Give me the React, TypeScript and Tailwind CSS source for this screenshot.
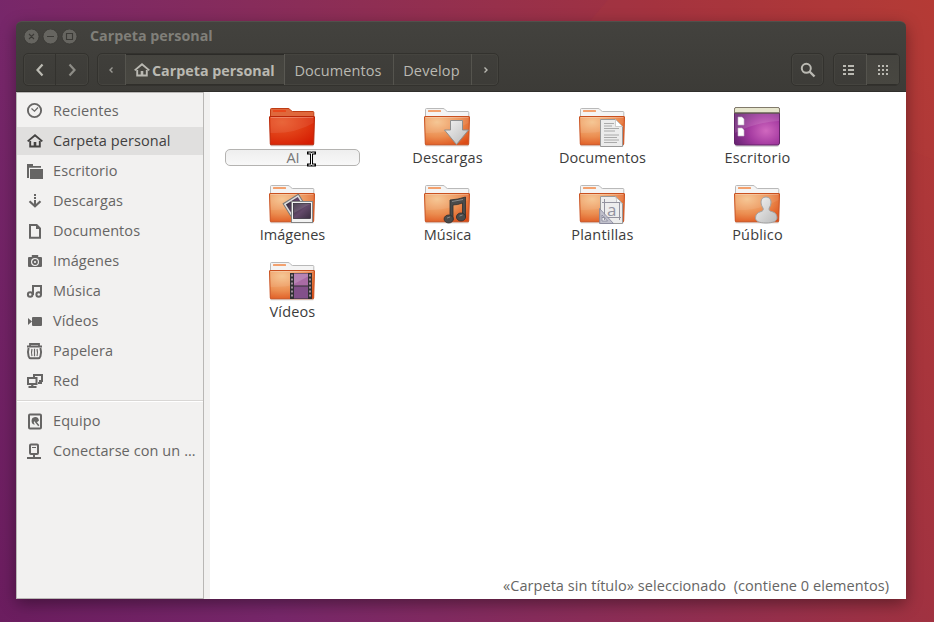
import React from 'react';

const G = '#666564';

type Name = 'clock' | 'home' | 'folder' | 'download' | 'doc' | 'camera' | 'music' | 'video' | 'trash' | 'network' | 'disk' | 'server';

function SideIcon({ name, color = G }: { name: Name; color?: string }) {
  const shapes: Record<Name, React.ReactNode> = {
    clock: (
      <g fill="none" stroke={color}>
        <circle cx="7.500" cy="7.500" r="6.600" strokeWidth="1.900" />
        <path d="M4.500 5.500l3 2.600L11 4.500" strokeWidth="1.200" />
      </g>
    ),
    home: (
      <g fill="none" stroke={color} strokeWidth="1.900">
        <path d="M.7 8.400L8 2.200l7.300 6.200" />
        <path d="M3.200 8v5.500h9.600V8" />
        <path d="M8 9V13.500" strokeWidth="2.600" />
      </g>
    ),
    folder: (
      <g fill={color}>
        <path d="M0 1h6v2h8v1.800H2V15H0z" />
        <path d="M3 6h13v10H3z" />
      </g>
    ),
    download: (
      <g fill="none" stroke={color}>
        <path d="M8 1v8" strokeWidth="2" strokeDasharray="2 1" />
        <path d="M2.500 8.200L8 13.200l5.500-5" strokeWidth="2.200" />
        <path d="M8 9v4" strokeWidth="2" />
      </g>
    ),
    doc: (
      <g>
        <path d="M3 2h6.600L13 5.500V14.800H3z" fill="none" stroke={color} strokeWidth="2" />
        <path d="M9 1l5 5H9z" fill={color} />
      </g>
    ),
    camera: (
      <g>
        <path fillRule="evenodd" d="M4.800 2h6.400v2H14q1 0 1 1v8q0 1-1 1H2q-1 0-1-1V5q0-1 1-1h2.800zM8 5a4 4 0 100 8 4 4 0 000-8" fill={color} />
        <circle cx="8" cy="9" r="2" fill="none" stroke={color} strokeWidth="1.800" />
      </g>
    ),
    music: (
      <g fill="none" stroke={color} strokeWidth="2">
        <circle cx="3.200" cy="11.500" r="2.300" />
        <circle cx="11.700" cy="11.500" r="2.300" />
        <path d="M6 12V3h8v9" />
      </g>
    ),
    video: (
      <g fill={color}>
        <rect x="5" y="4" width="10" height="9" rx="1" />
        <path d="M1 5l4 3.500L1 12z" />
      </g>
    ),
    trash: (
      <g fill="none" stroke={color}>
        <path d="M0 3.500h15M3 3V1h9v2" strokeWidth="1.800" />
        <path d="M1.600 5q-1.300 4.500 0 8.300 .6 2 2 2h7.800q1.400 0 2-2 1.500-3.800 0-8.300" strokeWidth="2" />
        <path d="M5 6q-1 3.500 0 7M7.500 5.800v7.400M10 6q1 3.500 0 7" strokeWidth="1.200" />
      </g>
    ),
    network: (
      <g fill="none" stroke={color} strokeWidth="2">
        <path d="M7 4V2h8v6h-3" />
        <rect x="1" y="5" width="8.500" height="6" />
        <path d="M1.500 14h8M5.300 11v3" strokeWidth="2.200" />
        <path d="M11 10h4" />
      </g>
    ),
    disk: (
      <g>
        <rect x="2" y="1.500" width="12" height="14" rx="1" fill="none" stroke={color} strokeWidth="2" />
        <path d="M8 4a3.800 3.800 0 013.900 3.800L9.500 9.500 8.300 7.700 6.700 9l1 2.700A3.900 3.900 0 018 4z" fill={color} />
        <path d="M8 8l3.800 4.700" stroke={color} strokeWidth="1.500" />
      </g>
    ),
    server: (
      <g fill="none" stroke={color} strokeWidth="2">
        <rect x="3" y="1.500" width="8" height="9.500" rx="1" />
        <path d="M0 15h14M7 11v4" />
        <path d="M5 4.500h4" strokeWidth="1" />
      </g>
    ),
  };
  return (
    <svg width="16" height="16" viewBox="0 0 16 16" className="shrink-0 overflow-visible">
      {shapes[name]}
    </svg>
  );
}

function SideItem({ name, label, active }: { name: Name; label: string; active?: boolean }) {
  return (
    <div className={`flex h-7 shrink-0 items-center gap-[10px] pl-[10px] ${active ? 'bg-[#e0dfde] text-[#41403f]' : 'text-[#666564]'}`}>
      <SideIcon name={name} color={active ? '#434241' : G} />
      <span className="tracking-[0.08px] whitespace-nowrap">{label}</span>
    </div>
  );
}

type Emblem = 'down' | 'doc' | 'photos' | 'note' | 'template' | 'person' | 'film';

function Folder({ red, emblem }: { red?: boolean; emblem?: Emblem }) {
  const id = red ? 'red' : 'orange';
  return (
    <svg width="48" height="42" viewBox="0 0 48 42" className="block">
      <defs>
        <radialGradient id={`f-${id}`} cx="0.28" cy="0.2" r="0.95">
          <stop offset="0" stopColor={red ? '#e8592a' : '#f5c28c'} />
          <stop offset="0.55" stopColor={red ? '#df3a13' : '#eb8d50'} />
          <stop offset="1" stopColor={red ? '#d51c02' : '#dc4c16'} />
        </radialGradient>
        <linearGradient id="metal" x1="0" y1="0" x2="1" y2="1">
          <stop offset="0" stopColor="#f4f4f4" />
          <stop offset="1" stopColor="#b9b9b9" />
        </linearGradient>
        <linearGradient id="violet" x1="0" y1="0" x2="1" y2="1">
          <stop offset="0" stopColor="#342a3a" />
          <stop offset="0.5" stopColor="#63496a" />
          <stop offset="1" stopColor="#3b2e42" />
        </linearGradient>
      </defs>
      <rect x="2" y="37" width="44" height="3.500" rx="1.500" fill="#000" opacity=".12" />
      <path d="M2.500 12V3.500q0-1 1-1H20q1.500 0 2.200 1.200t2.300 1.800H45q.8 0 .8 1V12z" fill={red ? '#df683c' : '#f4f4f4'} stroke={red ? '#bf3c13' : '#b9b9b9'} />
      <rect x="5" y="4" width="13" height="2" rx=".5" fill={red ? '#e8481c' : '#f3a16e'} />
      <path d="M1.500 11q0-.5.500-.5h44q.5 0 .5.500l-.8 27q0 .8-.8.800H3.100q-.8 0-.8-.800z" fill={`url(#f-${id})`} stroke={red ? '#b92506' : '#c9501f'} />
      <path d="M2.600 11.500h42.800" stroke="#fff" opacity=".3" />
      <path d="M2.500 27q24 1 43-10v-5h-43z" fill="#fff" opacity=".08" />
      {emblem === 'down' && <path d="M27.500 14.500h12V24h6L33.500 38.500 21.500 24h6z" fill="url(#metal)" stroke="#8f8f8f" />}
      {emblem === 'doc' && (
        <g>
          <path d="M22.500 13.500h15l7 7v20h-22z" fill="#ececec" stroke="#999" />
          <path d="M37.500 13.500v7h7z" fill="#fff" stroke="#bbb" strokeWidth=".7" />
          <path d="M26 17.500h10M26 20h8M26 22.500h15M26 25h11M26 29h15M26 31.500h13M26 34h15M26 36.500h13" stroke="#999" strokeWidth=".8" />
        </g>
      )}
      {emblem === 'photos' && (
        <g>
          <g transform="rotate(-32 26 24)">
            <rect x="18.500" y="15.500" width="18" height="18" fill="#ddd" stroke="#777" />
            <rect x="20.500" y="17.500" width="14" height="12" fill="url(#violet)" />
          </g>
          <rect x="23.500" y="18.500" width="21" height="21" fill="#f2f2f2" stroke="#858585" />
          <rect x="25.500" y="20.500" width="17" height="15" fill="url(#violet)" stroke="#282330" strokeWidth=".7" />
          <path d="M26 21h16L26 30z" fill="#fff" opacity=".13" />
        </g>
      )}
      {emblem === 'note' && (
        <g fill="#4b4b4b" stroke="#2f2f2f" strokeWidth=".8">
          <path d="M27 17q8-.5 15.500-3v20h-3V20q-5 2-9.500 2v15h-3z" />
          <ellipse cx="25.700" cy="36" rx="4.600" ry="4" />
          <ellipse cx="38" cy="34" rx="4.600" ry="4" />
          <path d="M29 18.500l11-2M24 35l3-1M36.500 33l3-1" stroke="#999" />
        </g>
      )}
      {emblem === 'template' && (
        <g>
          <path d="M22.500 13.500h15l7 7v20h-22z" fill="#ededed" stroke="#999" />
          <path d="M37.500 13.500q2 3 1 6 3-1 6 1z" fill="#fff" stroke="#aaa" strokeWidth=".7" />
          <path d="M26.500 16v21M41.500 19v18M24 19.500h17M24 34.500h19" stroke="#93939f" />
          <text x="29" y="32.500" fontFamily="Open Sans, sans-serif" fontSize="17" fill="#9292a0">a</text>
          <path fillRule="evenodd" d="M21.500 25.500v15h14zM24 32v6h5.500z" fill="#b8b8c5" fillOpacity=".85" stroke="#85859a" strokeWidth=".8" />
        </g>
      )}
      {emblem === 'person' && (
        <path d="M33 14c3 0 5 2 5 5s-1 4.500-1.800 6c-.5 2 .3 3 2.300 3.500 4 1 5.500 3 5.500 6.500 0 3-4 5-11 5s-10.500-2-10.500-5c0-3.500 2-5.500 5.500-6.500 2-.5 2.700-1.500 2-3.500-.8-1.500-2-3-2-6 0-3 2-5 5-5z" fill="url(#metal)" stroke="#a2a2a2" />
      )}
      {emblem === 'film' && (
        <g>
          <rect x="22" y="13" width="22" height="26" fill="#303033" />
          <rect x="26" y="13.500" width="14" height="12" fill="#a96ba5" />
          <rect x="26" y="26.500" width="14" height="12" fill="#83508a" />
          <path d="M26 13.500h14v3L26 24z" fill="#fff" opacity=".17" />
          <path d="M24 14.500v24M42 14.500v24" stroke="#a08f9c" strokeWidth="2" strokeDasharray="2 2" />
        </g>
      )}
    </svg>
  );
}

function DesktopIcon() {
  return (
    <svg width="48" height="42" viewBox="0 0 48 42" className="block">
      <defs>
        <radialGradient id="desk" cx="0.7" cy="0.62" r="0.75">
          <stop offset="0" stopColor="#d068bf" />
          <stop offset="0.5" stopColor="#a53ba1" />
          <stop offset="1" stopColor="#692474" />
        </radialGradient>
      </defs>
      <rect x="2" y="37" width="44" height="4" rx="2" fill="#000" opacity=".15" />
      <rect x="1.500" y="1.500" width="45" height="37.500" rx="2" fill="url(#desk)" stroke="#642369" />
      <path d="M2 7h44v8q-22 1-44 12z" fill="#fff" opacity=".12" />
      <path d="M1.500 7V3q0-1.500 1.500-1.500h42q1.500 0 1.500 1.500v4z" fill="#e6e5cc" stroke="#77775e" strokeWidth=".8" />
      <path d="M2 7h44" stroke="#4e4640" />
      <path d="M5 11h4l2 2v6H5zM5 22h4l2 2v6H5z" fill="#fff" stroke="#c7b5cb" strokeWidth=".6" />
    </svg>
  );
}

const grid: { label: string; emblem?: Emblem; tracking?: string }[] = [
  { label: 'AI' },
  { label: 'Descargas', emblem: 'down', tracking: 'tracking-[0.12px]' },
  { label: 'Documentos', emblem: 'doc', tracking: 'tracking-[0.08px]' },
  { label: 'Escritorio', tracking: 'tracking-[0.25px]' },
  { label: 'Imágenes', emblem: 'photos' },
  { label: 'Música', emblem: 'note' },
  { label: 'Plantillas', emblem: 'template', tracking: 'tracking-[0.2px]' },
  { label: 'Público', emblem: 'person', tracking: 'tracking-[0.15px]' },
  { label: 'Vídeos', emblem: 'film', tracking: 'tracking-[0.15px]' },
];

function TextCursor() {
  return (
    <svg width="9" height="16" viewBox="0 0 9 16" className="absolute top-px left-[81px]">
      <path d="M1.500 2h2q1 0 1 1 0-1 1-1h2M4.500 2.500v11M1.500 14h2q1 0 1-1 0 1 1 1h2" fill="none" stroke="#000" strokeWidth="3" strokeLinecap="square" />
      <path d="M1.500 2h2q1 0 1 1 0-1 1-1h2M4.500 2.500v11M1.500 14h2q1 0 1-1 0 1 1 1h2" fill="none" stroke="#fff" strokeWidth="1" />
    </svg>
  );
}

const group = 'flex h-[33px] overflow-hidden rounded-[5px] border border-[#33322e] shadow-[inset_0_0_0_1px_#45443f]';
const pressed = 'bg-linear-to-b from-[#45443f] to-[#484741] shadow-[inset_0_1px_0_#2c2b28,inset_0_-1px_0_#302f2b]';

export default function App() {
  return (
    <div className="relative h-[622px] w-[934px] overflow-hidden bg-[linear-gradient(65deg,#6b1d5f_0%,#77276a_23%,#8a2d58_48%,#97304b_64%,#a13240_77%,#b43a35_100%)] pt-[21px] pl-4 font-['Open_Sans',sans-serif] text-[14.5px] leading-5">
      <svg className="absolute top-0 left-0" width="934" height="622">
        <path d="M608 0H934V160L590 21z" fill="#c04338" opacity=".12" />
      </svg>
      <div className="relative flex h-[578px] w-[890px] flex-col rounded-t-[6px] shadow-[0_5px_16px_rgba(0,0,0,0.38)]">
        <header className="flex h-[71px] shrink-0 flex-col rounded-t-[6px] border-t border-[#51504b] bg-linear-to-b from-[#43423e] to-[#3c3b37] shadow-[inset_0_-1px_0_#302f2c]">
          <div className="flex h-[29px] items-center pl-[8px]">
            <svg width="54" height="16" viewBox="0 0 54 16">
              <g fill="#666560" stroke="#383733" strokeWidth=".8">
                <circle cx="7.500" cy="7.500" r="7.500" />
                <circle cx="26.500" cy="7.500" r="7.500" />
                <circle cx="45.500" cy="7.500" r="7.500" />
              </g>
              <path d="M5 5l5 5m0-5l-5 5M23 7.500h7M42.500 4.500h6v6h-6z" fill="none" stroke="#3b3a36" strokeWidth="1.100" />
            </svg>
            <span className="ml-[12px] pb-[2px] text-[14.3px] font-bold text-[#807f79]">Carpeta personal</span>
          </div>
          <div className="flex items-start pt-[2px] pr-[6px] pl-[7px] text-[#bab9b2]">
            <div className={group + ' w-[66px]'}>
              <div className="flex w-8 items-center justify-center border-r border-[#33322e]">
                <svg width="12" height="14" viewBox="0 0 12 14"><path d="M8.500 1.500L3.500 7l5 5.500" fill="none" stroke="#bbbab2" strokeWidth="2.200" /></svg>
              </div>
              <div className="flex flex-1 items-center justify-center">
                <svg width="12" height="14" viewBox="0 0 12 14"><path d="M3.500 1.500l5 5.500-5 5.500" fill="none" stroke="#8d8c86" strokeWidth="2.200" /></svg>
              </div>
            </div>
            <div className={group + ' ml-[8px] w-[402px]'}>
              <div className="flex w-[28px] items-center justify-center border-r border-[#55544e] pr-px">
                <svg width="6" height="8" viewBox="0 0 6 8"><path d="M4.500 1.500L2 4l2.500 2.500" fill="none" stroke="#9c9b95" strokeWidth="1.400" /></svg>
              </div>
              <div className={pressed + ' flex w-[159px] items-center border-r border-[#595852] pl-[8px]'}>
                <SideIcon name="home" color="#bab9b2" />
                <span className="ml-[2px] pt-[2px] text-[14.3px] font-bold whitespace-nowrap">Carpeta personal</span>
              </div>
              <div className="flex w-[109px] items-center justify-center border-r border-[#55544e] pt-[2px] pr-[2px] tracking-[0.08px]">Documentos</div>
              <div className="flex w-[78px] items-center justify-center border-r border-[#55544e] pt-[2px] pr-[2px] tracking-[0.2px]">Develop</div>
              <div className="flex flex-1 items-center justify-center pl-px">
                <svg width="6" height="8" viewBox="0 0 6 8"><path d="M1.500 1.500L4 4 1.500 6.500" fill="none" stroke="#bab9b2" strokeWidth="1.400" /></svg>
              </div>
            </div>
            <div className={group + ' ml-auto w-[33px] items-center justify-center'}>
              <svg width="16" height="16" viewBox="0 0 16 16"><circle cx="6.300" cy="6.300" r="4.500" fill="none" stroke="#bab9b2" strokeWidth="2" /><path d="M9.500 9.500l5 5" stroke="#bab9b2" strokeWidth="2.400" /></svg>
            </div>
            <div className={group + ' ml-[9px] w-[67px]'}>
              <div className="flex w-[33px] items-center justify-center border-r border-[#55544e] pr-[2px]">
                <svg width="12" height="10" viewBox="0 0 12 10" fill="#bab9b2"><path d="M0 0h3v2H0zM5 0h6v2H5zM0 4h3v2H0zM5 4h6v2H5zM0 8h3v2H0zM5 8h6v2H5z" /></svg>
              </div>
              <div className={pressed + ' flex flex-1 items-center justify-center'}>
                <svg width="10" height="10" viewBox="0 0 10 10" fill="#bab9b2"><path d="M0 0h2v2H0zM4 0h2v2H4zM8 0h2v2H8zM0 4h2v2H0zM4 4h2v2H4zM8 4h2v2H8zM0 8h2v2H0zM4 8h2v2H4zM8 8h2v2H8z" /></svg>
              </div>
            </div>
          </div>
        </header>
        <div className="flex min-h-0 flex-1">
          <aside className="w-[188px] shrink-0 border border-[#b9b7b5] bg-[#f2f1f0] pt-1">
            <nav className="flex flex-col gap-[2px]">
              <SideItem name="clock" label="Recientes" />
              <SideItem name="home" label="Carpeta personal" active />
              <SideItem name="folder" label="Escritorio" />
              <SideItem name="download" label="Descargas" />
              <SideItem name="doc" label="Documentos" />
              <SideItem name="camera" label="Imágenes" />
              <SideItem name="music" label="Música" />
              <SideItem name="video" label="Vídeos" />
              <SideItem name="trash" label="Papelera" />
              <SideItem name="network" label="Red" />
            </nav>
            <div className="mt-[5px] mb-[5px] h-[2px] border-t border-[#d9d7d5] bg-white" />
            <nav className="flex flex-col gap-[2px]">
              <SideItem name="disk" label="Equipo" />
              <SideItem name="server" label="Conectarse con un …" />
            </nav>
          </aside>
          <div className="w-[6px] shrink-0 bg-[#f2f1f0]" />
          <main className="flex flex-1 flex-col bg-white">
            <div className="grid auto-rows-[77px] grid-cols-[repeat(4,155px)] pt-[14px] pl-[5px]">
              {grid.map((item, i) => (
                <div key={item.label} className="flex flex-col items-center text-[#3c3c3c]">
                  <div className="h-[42px] pr-[2px]">
                    {item.label === 'Escritorio' ? <DesktopIcon /> : <Folder red={i === 0} emblem={item.emblem} />}
                  </div>
                  {i === 0 ? (
                    <div className="relative mt-px flex h-[17px] w-[135px] items-center justify-center rounded-[5px] border border-[#b4b3b1] bg-linear-to-b from-[#eeeeee] to-[#f8f8f8] text-[#777]">
                      <span className="pl-px leading-[15px]">AI</span>
                      <TextCursor />
                    </div>
                  ) : (
                    <span className={`whitespace-nowrap ${item.tracking ?? ''}`}>{item.label}</span>
                  )}
                </div>
              ))}
            </div>
            <div className="mt-auto pr-[17px] pb-[3px] text-right tracking-[0.05px] whitespace-pre text-[#666564]">«Carpeta sin título» seleccionado  (contiene 0 elementos)</div>
          </main>
        </div>
      </div>
    </div>
  );
}
